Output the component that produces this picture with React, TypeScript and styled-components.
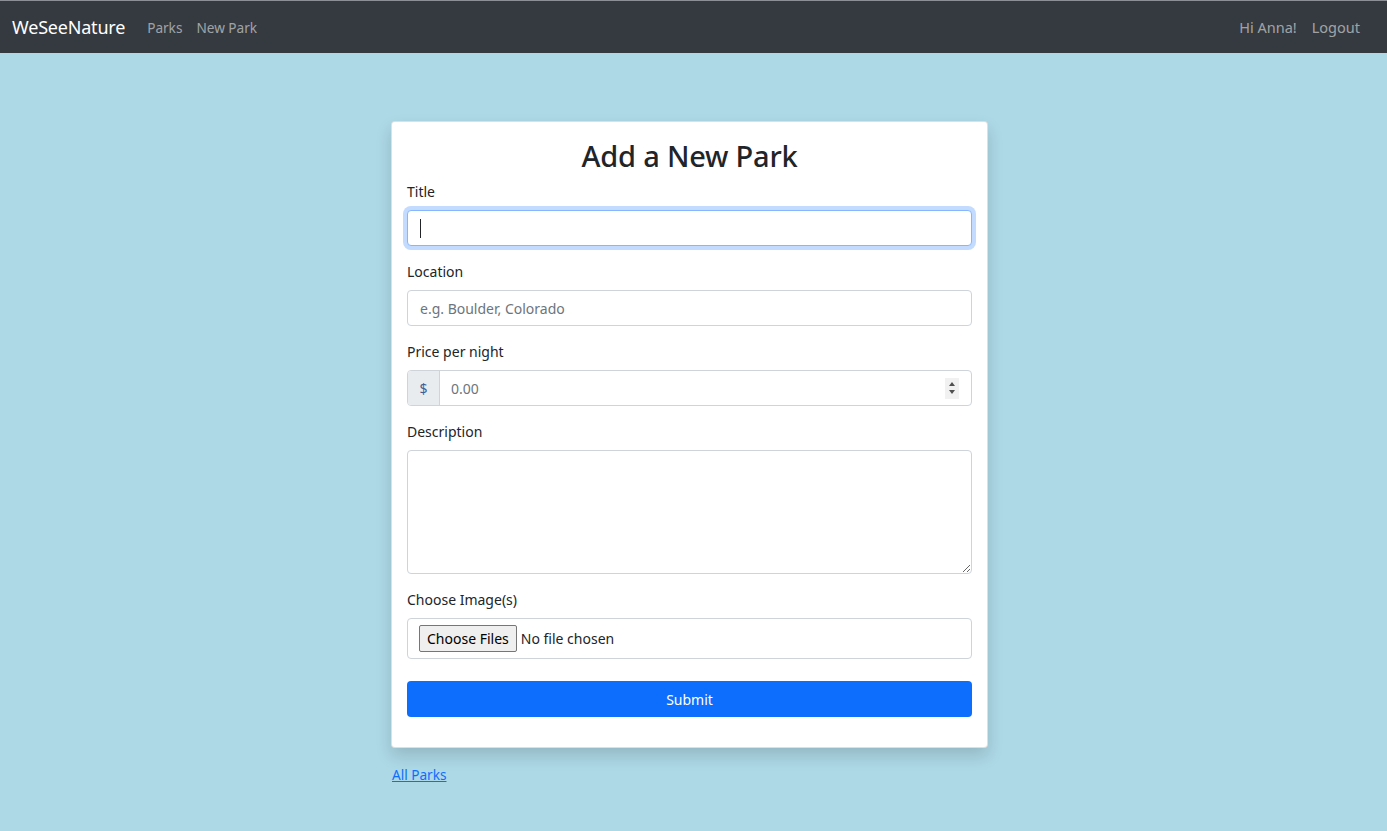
import React from "react";
import styled, { createGlobalStyle } from "styled-components";

const Global = createGlobalStyle`
  html, body { margin: 0; padding: 0; }
  body {
    background: #add8e6;
    font-family: "Noto Sans", "Open Sans", sans-serif;
    color: #212529;
    min-height: 831px;
  }
  * { box-sizing: border-box; }
`;

const Nav = styled.nav`
  height: 53px;
  background: #343a40;
  border-top: 1px solid #8c9096;
  display: flex;
  align-items: center;
  padding: 0 27px 0 12px;
`;

const Brand = styled.a`
  color: #fff;
  font-size: 18px;
  text-decoration: none;
  margin-right: 22px;
  letter-spacing: -0.2px;
`;

const NavGroup = styled.div<{ $right?: boolean }>`
  display: flex;
  gap: ${(p) => (p.$right ? 15 : 14)}px;
  margin-left: ${(p) => (p.$right ? "auto" : "0")};
`;

const NavLink = styled.a<{ $tight?: boolean }>`
  color: rgba(255, 255, 255, 0.55);
  font-size: ${(p) => (p.$tight ? 13.6 : 14.5)}px;
  text-decoration: none;
`;

const Main = styled.main`
  padding: 68px 0 0 391px;
`;

const Card = styled.div`
  width: 597px;
  background: #fff;
  border: 1px solid rgba(0, 0, 0, 0.125);
  border-radius: 4px;
  box-shadow: 0 8px 16px rgba(0, 0, 0, 0.15);
  padding: 16px 15px 30px;
`;

const Heading = styled.h1`
  margin: 0 0 6px;
  text-align: center;
  font-size: 29px;
  font-weight: 500;
  line-height: 36px;
  letter-spacing: -0.2px;
`;

const Group = styled.div<{ $gap?: number }>`
  margin-bottom: ${(p) => p.$gap ?? 14}px;
`;

const Label = styled.label`
  display: block;
  font-size: 14px;
  line-height: 24px;
  margin-bottom: 6px;
`;

const Field = styled.input<{ $focus?: boolean }>`
  display: block;
  width: 100%;
  height: 36px;
  padding: 0 12px;
  font-family: inherit;
  font-size: 14px;
  color: #212529;
  border: 1px solid ${(p) => (p.$focus ? "#86b7fe" : "#ced4da")};
  border-radius: 4px;
  outline: none;
  box-shadow: ${(p) => (p.$focus ? "0 0 0 4px rgba(13,110,253,0.25)" : "none")};
  caret-color: transparent;
  &::placeholder { color: #6c757d; }
`;

const FocusWrap = styled.div`
  position: relative;
`;

const Caret = styled.span`
  position: absolute;
  left: 13px;
  top: 9px;
  width: 1px;
  height: 19px;
  background: #212529;
`;

const InputGroup = styled.div`
  display: flex;
  height: 36px;
  border: 1px solid #ced4da;
  border-radius: 4px;
  overflow: hidden;
`;

const Addon = styled.span`
  width: 32px;
  display: flex;
  align-items: center;
  justify-content: center;
  background: #e9ecef;
  border-right: 1px solid #ced4da;
  font-size: 14px;
  color: #3d5f95;
`;

const BareInput = styled.input`
  flex: 1;
  border: none;
  outline: none;
  padding: 0 11px;
  font-family: inherit;
  font-size: 14px;
  &::placeholder { color: #6c757d; }
`;

const Spinner = styled.span`
  width: 14px;
  align-self: center;
  height: 21px;
  margin-right: 12px;
  background: #f1f1f1;
  display: flex;
  flex-direction: column;
  align-items: center;
  justify-content: space-around;
  padding: 3px 0;
`;

const Tri = styled.span<{ $down?: boolean }>`
  width: 0;
  height: 0;
  border-left: 3.5px solid transparent;
  border-right: 3.5px solid transparent;
  ${(p) =>
    p.$down
      ? "border-top: 4px solid #505050;"
      : "border-bottom: 4px solid #505050;"}
`;

const TextArea = styled.textarea`
  display: block;
  width: 100%;
  height: 124px;
  padding: 6px 12px;
  font-family: inherit;
  font-size: 14px;
  border: 1px solid #ced4da;
  border-radius: 4px;
  outline: none;
`;

const FileBox = styled.label`
  display: flex;
  align-items: center;
  height: 41px;
  padding: 0 11px;
  border: 1px solid #ced4da;
  border-radius: 4px;
  font-size: 14px;
  color: #212529;
  cursor: pointer;
`;

const FileButton = styled.span`
  display: inline-flex;
  align-items: center;
  height: 27px;
  padding: 0 7px;
  margin-right: 4px;
  background: #efefef;
  border: 1px solid #767676;
  border-radius: 2px;
  color: #000;
  font-size: 14px;
`;

const HiddenFile = styled.input`
  display: none;
`;

const Submit = styled.button`
  display: block;
  width: 100%;
  height: 36px;
  margin-top: 22px;
  background: #0d6efd;
  color: #fff;
  border: none;
  border-radius: 4px;
  font-family: inherit;
  font-size: 14px;
`;

const BackLink = styled.a`
  display: inline-block;
  margin-top: 16px;
  margin-left: 1px;
  color: #0d6efd;
  font-size: 13.6px;
  line-height: 22px;
`;

export default function App() {
  return (
    <>
      <Global />
      <Nav>
        <Brand href="#">WeSeeNature</Brand>
        <NavGroup>
          <NavLink href="#" $tight>Parks</NavLink>
          <NavLink href="#" $tight>New Park</NavLink>
        </NavGroup>
        <NavGroup $right>
          <NavLink href="#">Hi Anna!</NavLink>
          <NavLink href="#">Logout</NavLink>
        </NavGroup>
      </Nav>
      <Main>
        <Card>
          <Heading>Add a New Park</Heading>
          <Group>
            <Label htmlFor="title">Title</Label>
            <FocusWrap>
              <Field id="title" $focus />
              <Caret />
            </FocusWrap>
          </Group>
          <Group>
            <Label htmlFor="location">Location</Label>
            <Field id="location" placeholder="e.g. Boulder, Colorado" />
          </Group>
          <Group>
            <Label htmlFor="price">Price per night</Label>
            <InputGroup>
              <Addon>$</Addon>
              <BareInput id="price" placeholder="0.00" />
              <Spinner>
                <Tri />
                <Tri $down />
              </Spinner>
            </InputGroup>
          </Group>
          <Group>
            <Label htmlFor="description">Description</Label>
            <TextArea id="description" />
          </Group>
          <Group $gap={0}>
            <Label htmlFor="image">Choose Image(s)</Label>
            <FileBox htmlFor="image">
              <FileButton>Choose Files</FileButton>
              <span>No file chosen</span>
              <HiddenFile id="image" type="file" multiple />
            </FileBox>
          </Group>
          <Submit>Submit</Submit>
        </Card>
        <BackLink href="#">All Parks</BackLink>
      </Main>
    </>
  );
}
